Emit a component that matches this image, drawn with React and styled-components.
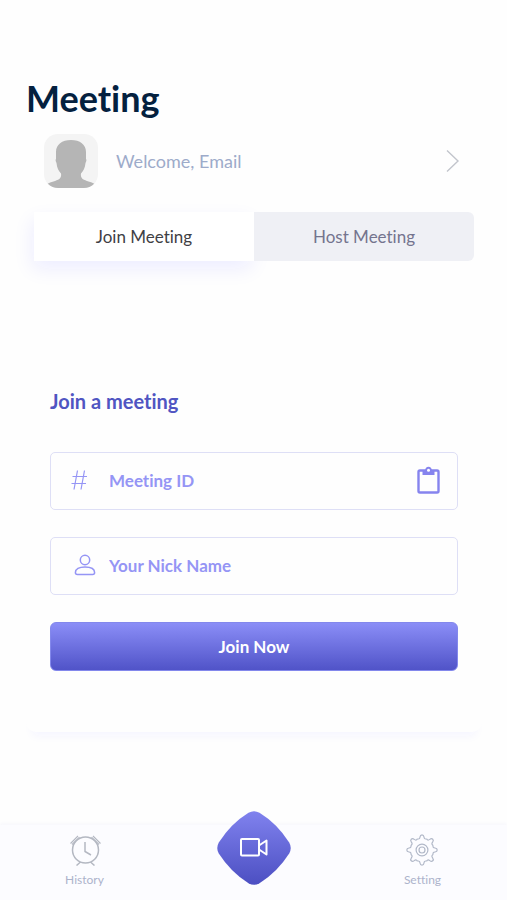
import { useState } from 'react';
import styled, { createGlobalStyle } from 'styled-components';

const GlobalStyle = createGlobalStyle`
  * {
    box-sizing: border-box;
  }
  body {
    margin: 0;
    background: #fefefe;
    font-family: Lato, 'Open Sans', sans-serif;
    font-variant-ligatures: none;
  }
  button,
  input {
    font-family: inherit;
    font-variant-ligatures: none;
  }
`;

const Page = styled.div`
  min-height: 100vh;
  display: flex;
  flex-direction: column;
`;

const Main = styled.main`
  flex: 1;
  padding: 76px 25px 0 26px;
  display: flex;
  flex-direction: column;
`;

const Title = styled.h1`
  margin: 0;
  font-size: 36px;
  line-height: 44px;
  font-weight: 700;
  color: #04213f;
`;

const Profile = styled.button`
  display: flex;
  align-items: center;
  gap: 18px;
  margin-top: 14px;
  padding: 0 22px 0 18px;
  border: 0;
  background: none;
  color: #9dabca;
  font-size: 18px;
  line-height: 24px;
  text-align: left;
  cursor: pointer;
`;

const Avatar = styled.svg`
  width: 54px;
  height: 54px;
  border-radius: 14px;
  background: #f4f4f4;
`;

const ProfileName = styled.span`
  flex: 1;
`;

const Tabs = styled.div`
  display: grid;
  grid-template-columns: 1fr 1fr;
  margin: 24px 8px 0;
`;

const Tab = styled.button`
  height: 49px;
  border: 0;
  border-radius: ${({ $active }) => ($active ? '0' : '0 6px 6px 0')};
  background: ${({ $active }) => ($active ? '#ffffff' : '#eff0f5')};
  box-shadow: ${({ $active }) => ($active ? '-2px 8px 20px #ededff' : 'none')};
  color: ${({ $active }) => ($active ? '#3f3f45' : '#74748e')};
  font-size: 17px;
  cursor: pointer;
`;

const Card = styled.form`
  display: flex;
  flex-direction: column;
  margin: 80px 0 56px;
  padding: 48px 24px 61px;
  border-radius: 10px;
  background: #fefefe;
  box-shadow: 0 10px 10px -6px #f5f5ff;
`;

const CardTitle = styled.h2`
  margin: 0 0 39px;
  font-size: 20px;
  line-height: 24px;
  font-weight: 700;
  color: #5055c2;
`;

const Field = styled.label`
  display: flex;
  align-items: center;
  height: 58px;
  margin-bottom: 27px;
  padding: 0 16px 2px 20px;
  border: 1px solid #dedff6;
  border-radius: 5px;
  color: #9595f5;
`;

const FieldIcon = styled.span`
  display: flex;
  width: 38px;
  flex-shrink: 0;
`;

const Input = styled.input`
  flex: 1;
  min-width: 0;
  padding: 0;
  border: 0;
  outline: 0;
  background: none;
  color: #5055c2;
  font-size: 17px;
  font-weight: 700;
  &::placeholder {
    color: #9595f5;
    opacity: 1;
  }
`;

const IconButton = styled.button`
  display: flex;
  padding: 0;
  border: 0;
  background: none;
  color: #8684ee;
  cursor: pointer;
`;

const Submit = styled.button`
  height: 49px;
  border: 1px solid #8388ec;
  border-radius: 6px;
  background: linear-gradient(#8c8ff8, #4f52c7) border-box;
  color: #ffffff;
  font-size: 17px;
  font-weight: 700;
  cursor: pointer;
`;

const BottomNav = styled.nav`
  display: grid;
  grid-template-columns: repeat(3, 1fr);
  justify-items: center;
  align-items: start;
  height: 75px;
  background: #fcfcff;
  box-shadow: 0 -1px 4px #f5f5fb;
`;

const NavItem = styled.a`
  display: flex;
  flex-direction: column;
  align-items: center;
  gap: 6px;
  padding-top: 9px;
  color: #acb3cb;
  font-size: 12px;
  line-height: 16px;
  text-decoration: none;
`;

const CallButton = styled.button`
  display: flex;
  margin-top: -14px;
  padding: 0;
  border: 0;
  background: none;
  cursor: pointer;
`;

const ChevronIcon = () => (
  <svg width="15" height="24" viewBox="0 0 15 24" fill="none" stroke="#c2c5cc" strokeWidth="1.4" aria-hidden="true">
    <path d="M2 1.5 13 12 2 22.5" />
  </svg>
);

const HashIcon = () => (
  <svg width="17" height="22" viewBox="0 0 17 22" fill="none" stroke="currentColor" strokeWidth="1.2" aria-hidden="true">
    <path d="M6.5 1.5 3 20.5M13.5 1.5 10 20.5M1.5 7.5H16M.5 14.5H15" />
  </svg>
);

const PersonIcon = () => (
  <svg width="28" height="22" viewBox="-4 0 28 22" fill="none" stroke="currentColor" strokeWidth="1.5" aria-hidden="true">
    <circle cx="10" cy="6" r="4.7" />
    <path d="M.4 18.5C.4 14.8 4 12.9 10 12.9s9.600 1.900 9.600 5.600c0 1.300-.7 2-2 2H2.400c-1.300 0-2-.7-2-2Z" />
  </svg>
);

const ClipboardIcon = () => (
  <svg width="25" height="28" viewBox="0 0 25 28" fill="none" stroke="currentColor" aria-hidden="true">
    <rect x="2.5" y="4.5" width="20" height="22" rx="1.4" strokeWidth="2.4" />
    <path d="M6.5 4.500H9C9.300 2 10.500.7 12.500.7S15.700 2 16 4.500h2.500v4.500h-12Z" fill="currentColor" stroke="none" />
    <circle cx="12.500" cy="4.300" r="1.500" fill="#ffffff" stroke="none" />
  </svg>
);

const ClockIcon = () => (
  <svg width="32" height="32" viewBox="0 0 32 32" fill="none" stroke="#b4b8c2" strokeWidth="1.5" aria-hidden="true">
    <circle cx="16.500" cy="16" r="13" />
    <path d="M16 8v9.500l6 3.500M11.500 28 7.500 31.500M21.500 28l4 3.500" />
    <path d="M1.500 9.500 9 2M3 10.500 10.500 3.200M24 2l7.500 7.500M22.500 3.200 30 10.500" strokeWidth="1.1" />
  </svg>
);

const TOOTH_ANGLES = [0, 45, 90, 135, 180, 225, 270, 315];

const GearIcon = () => (
  <svg width="32" height="32" viewBox="0 0 32 32" fill="none" stroke="#b1b8c8" strokeWidth="1.2" aria-hidden="true">
    {TOOTH_ANGLES.map((angle) => (
      <path
        key={angle}
        d="M11.400 4.900C13.300 5.300 13.800 4.500 14 3 14.200 1.500 14.800.8 16 .8s1.800.7 2 2.200c.2 1.500.7 2.300 2.600 1.900"
        transform={`rotate(${angle} 16 16)`}
      />
    ))}
    <circle cx="16" cy="16" r="5.9" />
    <circle cx="16" cy="16" r="3" />
  </svg>
);

const CallIcon = () => (
  <svg width="74" height="74" viewBox="0 0 74 74" aria-hidden="true">
    <defs>
      <linearGradient id="call" x1="0" y1="0" x2="0" y2="1">
        <stop offset="0" stopColor="#8082ee" />
        <stop offset="1" stopColor="#4c4fc2" />
      </linearGradient>
    </defs>
    <path
      d="M31.500 1.800Q37-1.300 42.500 1.800Q60 12.500 72.200 31.500Q75.300 37 72.200 42.500Q60 61.500 42.500 72.200Q37 75.300 31.500 72.200Q14 61.500 1.800 42.500Q-1.300 37 1.800 31.500Q14 12.500 31.500 1.800Z"
      fill="url(#call)"
    />
    <g fill="none" stroke="#ffffff" strokeWidth="2" strokeLinejoin="round">
      <rect x="24" y="28" width="18" height="16.500" rx="1" />
      <path d="M42 34.500 49.500 29.500V43.500L42 38.500" />
    </g>
  </svg>
);

const App = () => {
  const [tab, setTab] = useState('join');

  return (
    <Page>
      <GlobalStyle />
      <Main>
        <Title>Meeting</Title>
        <Profile type="button">
          <Avatar viewBox="0 0 54 54" aria-hidden="true">
            <path
              d="M27 6C18 6 12 10.500 12 18v7c-.8 1-.3 2.500.5 4 .5 5 2.200 8 4.500 10.500.5 3-.5 5-3 6.200C10.500 47.500 5 48 2 51v4h50v-4c-3-3-8.500-3.500-12-5.300-2.500-1.200-3.500-3.200-3-6.200 2.300-2.500 4-5.500 4.500-10.500.8-1.500 1.300-3 .5-4v-7C42 10.500 36 6 27 6Z"
              fill="#b5b5b5"
            />
          </Avatar>
          <ProfileName>Welcome, Email</ProfileName>
          <ChevronIcon />
        </Profile>
        <Tabs>
          <Tab type="button" $active={tab === 'join'} onClick={() => setTab('join')}>
            Join Meeting
          </Tab>
          <Tab type="button" $active={tab === 'host'} onClick={() => setTab('host')}>
            Host Meeting
          </Tab>
        </Tabs>
        <Card onSubmit={(e) => e.preventDefault()}>
          <CardTitle>Join a meeting</CardTitle>
          <Field>
            <FieldIcon>
              <HashIcon />
            </FieldIcon>
            <Input placeholder="Meeting ID" aria-label="Meeting ID" />
            <IconButton type="button" aria-label="Paste meeting ID">
              <ClipboardIcon />
            </IconButton>
          </Field>
          <Field>
            <FieldIcon>
              <PersonIcon />
            </FieldIcon>
            <Input placeholder="Your Nick Name" aria-label="Your Nick Name" />
          </Field>
          <Submit type="submit">Join Now</Submit>
        </Card>
      </Main>
      <BottomNav>
        <NavItem href="#history">
          <ClockIcon />
          History
        </NavItem>
        <CallButton type="button" aria-label="Start video call">
          <CallIcon />
        </CallButton>
        <NavItem href="#setting">
          <GearIcon />
          Setting
        </NavItem>
      </BottomNav>
    </Page>
  );
};

export default App;
